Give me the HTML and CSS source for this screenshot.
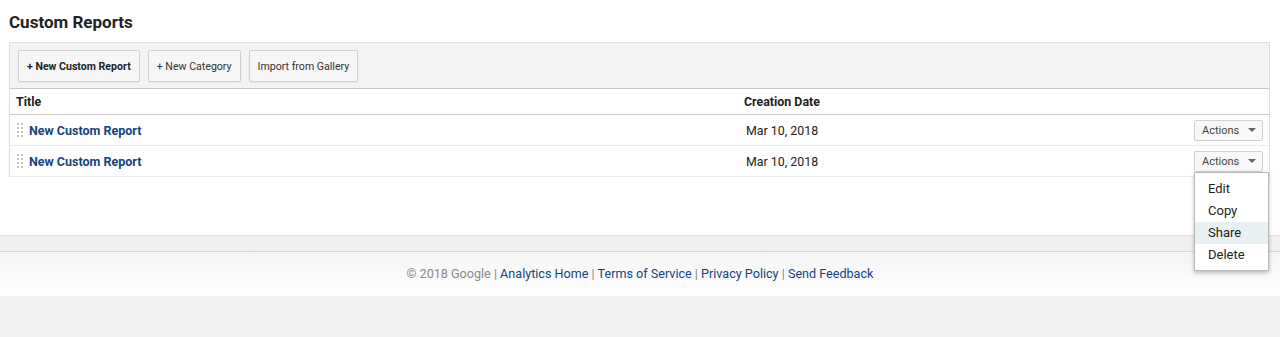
FILE: index.html
```html
<!DOCTYPE html>
<html>
<head>
    <meta charset="utf-8" />
    <title>Custom Reports</title>
    <link rel="stylesheet" href="styles.css">
</head>
<body>
    <main class="page">
        <h1 class="page-title">Custom Reports</h1>

        <div class="reports">
            <div class="toolbar">
                <button class="btn btn-primary">+ New Custom Report</button>
                <button class="btn">+ New Category</button>
                <button class="btn">Import from Gallery</button>
            </div>

            <div class="row row-head">
                <div class="cell cell-title">Title</div>
                <div class="cell cell-date">Creation Date</div>
                <div class="cell cell-actions"></div>
            </div>

            <div class="row">
                <div class="cell cell-title">
                    <svg class="handle" width="6" height="14" viewBox="0 0 6 14">
                        <g fill="#c4c4c4">
                            <rect x="0" y="0" width="2" height="2" /><rect x="4" y="0" width="2" height="2" />
                            <rect x="0" y="4" width="2" height="2" /><rect x="4" y="4" width="2" height="2" />
                            <rect x="0" y="8" width="2" height="2" /><rect x="4" y="8" width="2" height="2" />
                            <rect x="0" y="12" width="2" height="2" /><rect x="4" y="12" width="2" height="2" />
                        </g>
                    </svg>
                    <a href="#" class="report-link">New Custom Report</a>
                </div>
                <div class="cell cell-date">Mar 10, 2018</div>
                <div class="cell cell-actions">
                    <div class="actions">
                        <button class="btn-actions">Actions <span class="caret"></span></button>
                    </div>
                </div>
            </div>

            <div class="row">
                <div class="cell cell-title">
                    <svg class="handle" width="6" height="14" viewBox="0 0 6 14">
                        <g fill="#c4c4c4">
                            <rect x="0" y="0" width="2" height="2" /><rect x="4" y="0" width="2" height="2" />
                            <rect x="0" y="4" width="2" height="2" /><rect x="4" y="4" width="2" height="2" />
                            <rect x="0" y="8" width="2" height="2" /><rect x="4" y="8" width="2" height="2" />
                            <rect x="0" y="12" width="2" height="2" /><rect x="4" y="12" width="2" height="2" />
                        </g>
                    </svg>
                    <a href="#" class="report-link">New Custom Report</a>
                </div>
                <div class="cell cell-date">Mar 10, 2018</div>
                <div class="cell cell-actions">
                    <div class="actions">
                        <button class="btn-actions">Actions <span class="caret"></span></button>
                        <ul class="menu">
                            <li>Edit</li>
                            <li>Copy</li>
                            <li class="hover">Share</li>
                            <li>Delete</li>
                        </ul>
                    </div>
                </div>
            </div>
        </div>
    </main>

    <div class="footer-band"></div>
    <footer class="footer">
        <span class="muted">&copy; 2018 Google</span> <span class="sep">|</span>
        <a href="#">Analytics Home</a> <span class="sep">|</span>
        <a href="#">Terms of Service</a> <span class="sep">|</span>
        <a href="#">Privacy Policy</a> <span class="sep">|</span>
        <a href="#">Send Feedback</a>
    </footer>
</body>
</html>
```

FILE: styles.css
```css
body {
    margin: 0;
    padding: 0;
    font-family: Roboto, "Liberation Sans", sans-serif;
    color: #222;
    background: #f2f2f2;
}

.page {
    background: #fff;
    height: 235px;
    padding: 12px 10px 0 9px;
    box-sizing: border-box;
}

.page-title {
    margin: 0 0 10px;
    font-size: 17px;
    line-height: 20px;
    font-weight: bold;
    color: #222;
}

.reports {
    border-left: 1px solid #ddd;
    border-right: 1px solid #ddd;
    border-top: 1px solid #ddd;
}

.toolbar {
    display: flex;
    gap: 8px;
    background: #f3f3f3;
    padding: 7px 8px 6px;
    border-bottom: 1px solid #c6c6c6;
}

.btn {
    height: 32px;
    padding: 0 8px;
    font-family: inherit;
    font-size: 10.6px;
    color: #333;
    background: #f6f6f6;
    border: 1px solid #d0d0d0;
    border-radius: 2px;
    box-shadow: 0 1px 1px rgba(0, 0, 0, 0.06);
}

.btn-primary {
    font-weight: bold;
    color: #222;
}

.row {
    display: grid;
    grid-template-columns: 728px 1fr auto;
    align-items: center;
    height: 30px;
    border-bottom: 1px solid #ebebeb;
    font-size: 12.4px;
}

.row-head {
    height: 25px;
    border-bottom: 1px solid #c8c8c8;
    font-weight: bold;
}

.cell-title {
    display: flex;
    align-items: center;
    padding-left: 6px;
}

.row-head .cell-date {
    padding-left: 6px;
}

.cell-date {
    padding-left: 8px;
}

.cell-actions {
    padding-right: 6px;
}

.handle {
    display: block;
    margin: 0 6px 0 1px;
}

.report-link {
    color: #13447f;
    font-weight: bold;
    font-size: 12.5px;
    text-decoration: none;
}

.actions {
    position: relative;
}

.btn-actions {
    display: flex;
    align-items: center;
    height: 21px;
    width: 69px;
    padding: 0 0 0 7px;
    font-family: inherit;
    font-size: 11px;
    color: #444;
    background: #f8f8f8;
    border: 1px solid #d0d0d0;
    border-radius: 2px;
}

.caret {
    margin-left: 9px;
    border-left: 4px solid transparent;
    border-right: 4px solid transparent;
    border-top: 4px solid #666;
}

.menu {
    position: absolute;
    top: 21px;
    left: 0;
    width: 73px;
    margin: 0;
    padding: 5px 0 4px;
    list-style: none;
    background: #fff;
    border: 1px solid #b8b8b8;
    box-shadow: 0 2px 4px rgba(0, 0, 0, 0.25);
    font-size: 13px;
    z-index: 2;
}

.menu li {
    height: 22px;
    line-height: 22px;
    padding-left: 13px;
    color: #222;
}

.menu li.hover {
    background: #e8f0f3;
}

.footer-band {
    height: 15px;
    background: #f0f0f0;
    border-top: 1px solid #e3e3e3;
    border-bottom: 1px solid #d6d6d6;
}

.footer {
    height: 44px;
    line-height: 44px;
    text-align: center;
    font-size: 12.6px;
    background: linear-gradient(#f4f4f4, #fff);
}

.footer a {
    color: #13447f;
    text-decoration: none;
}

.muted, .sep {
    color: #888;
}
```
